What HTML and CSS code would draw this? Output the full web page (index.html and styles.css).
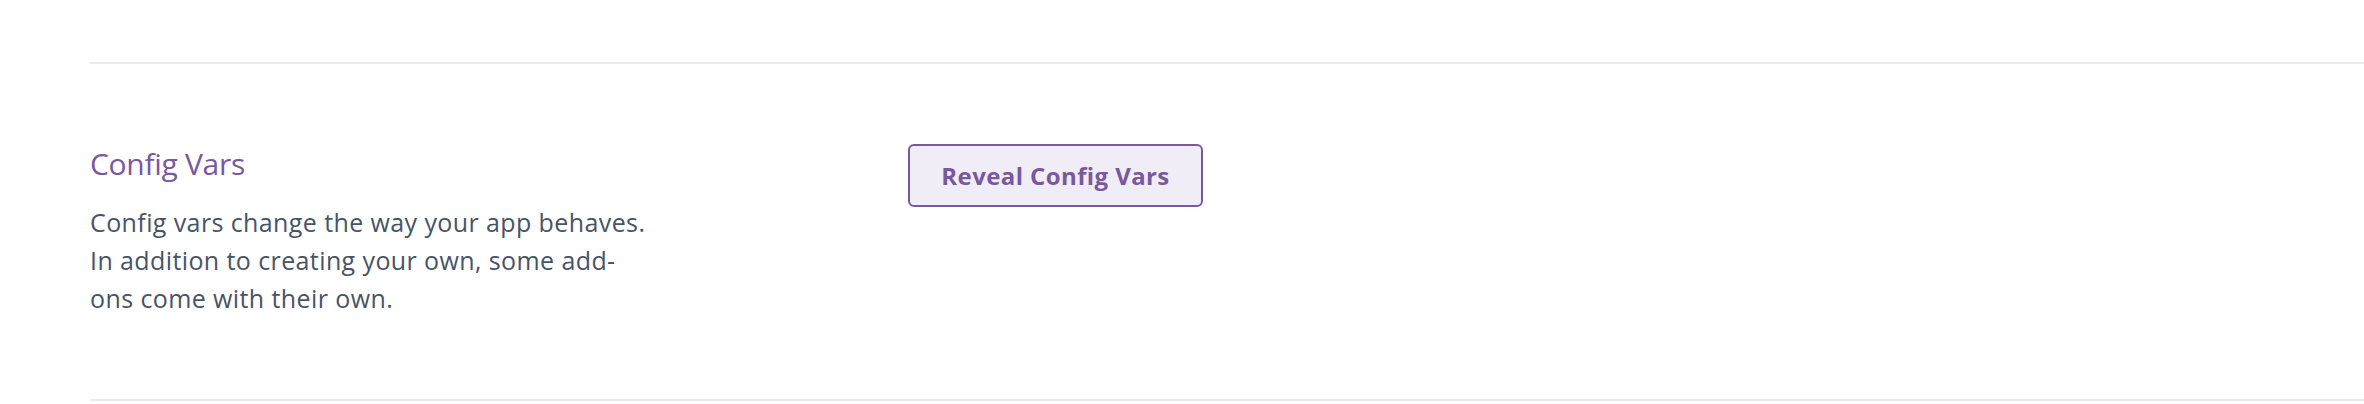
FILE: index.html
```html
<!DOCTYPE html>
<html lang="en">
<head>
<meta charset="utf-8">
<title>Config Vars</title>
<link rel="stylesheet" href="styles.css">
</head>
<body>
  <div class="page">
    <section class="settings-row">
      <div class="settings-info">
        <h3 class="settings-title">Config Vars</h3>
        <p class="settings-desc">Config vars change the way your app behaves. In addition to creating your own, some add-ons come with their own.</p>
      </div>
      <div class="settings-action">
        <button class="btn-reveal" type="button">Reveal Config Vars</button>
      </div>
    </section>
  </div>
</body>
</html>
```

FILE: styles.css
```css
html, body {
  margin: 0;
  padding: 0;
  background: #ffffff;
}

body {
  font-family: "Open Sans", Lato, sans-serif;
}

.page {
  padding-top: 62px;
  padding-left: 90px;
}

.settings-row {
  display: flex;
  align-items: flex-start;
  border-top: 2px solid #e7eaee;
  border-bottom: 2px solid #e7eaee;
  padding: 80px 0 82px 0;
}

.settings-info {
  width: 818px;
  flex: none;
}

.settings-title {
  margin: 0;
  padding-top: 2px;
  font-size: 30px;
  letter-spacing: -0.3px;
  line-height: 36px;
  font-weight: 400;
  color: #79589f;
}

.settings-desc {
  margin: 21px 0 0 0;
  max-width: 565px;
  font-size: 25px;
  letter-spacing: 0.4px;
  line-height: 38px;
  color: #475467;
}

.settings-action {
  flex: none;
}

.btn-reveal {
  font-family: "Open Sans", Lato, sans-serif;
  font-weight: 700;
  font-size: 24px;
  letter-spacing: 0.4px;
  color: #79589f;
  background: #f1edf6;
  border: 2px solid #79589f;
  border-radius: 6px;
  height: 63px;
  width: 295px;
  padding: 0;
  cursor: pointer;
}
```
